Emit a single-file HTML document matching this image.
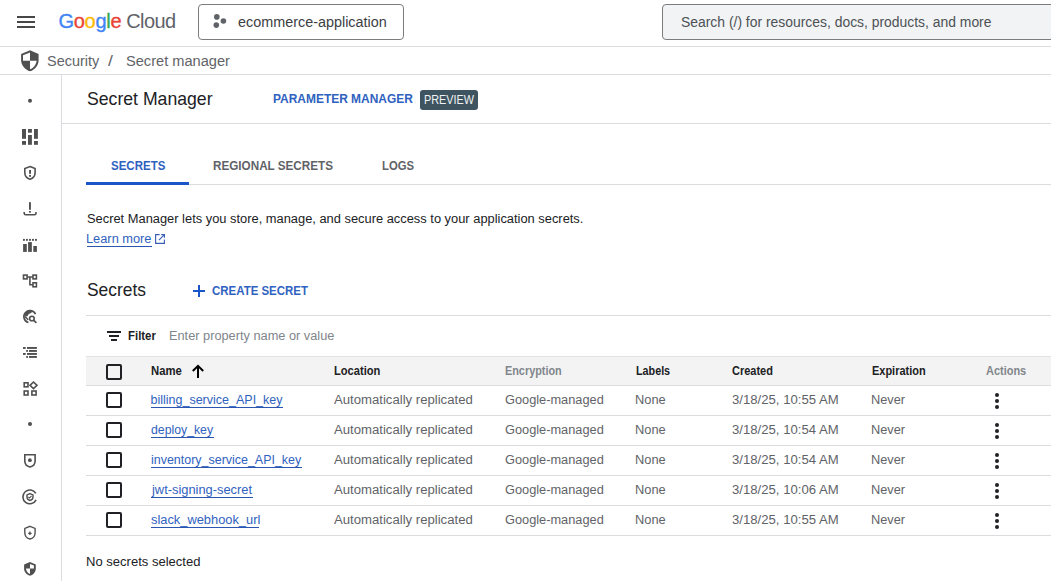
<!DOCTYPE html>
<html><head><meta charset="utf-8"><title>Secret Manager</title>
<style>
html,body{margin:0;padding:0;width:1051px;height:581px;overflow:hidden;background:#fff;position:relative}
.t{position:absolute;white-space:nowrap;font-family:"Liberation Sans", sans-serif}
.b{position:absolute}
</style></head><body>
<div class="b" style="left:17px;top:16px;width:18px;height:2px;background:#474747"></div>
<div class="b" style="left:17px;top:21px;width:18px;height:2px;background:#474747"></div>
<div class="b" style="left:17px;top:26px;width:18px;height:2px;background:#474747"></div>
<div class="t" style="left:58.5px;top:9.79px;font-size:20px;line-height:22.34px;letter-spacing:-0.3px;-webkit-text-stroke:0.35px currentColor"><span style="color:#4285f4">G</span><span style="color:#ea4335">o</span><span style="color:#fbbc04">o</span><span style="color:#4285f4">g</span><span style="color:#34a853">l</span><span style="color:#ea4335">e</span><span style="color:#5f6368;letter-spacing:-0.6px;-webkit-text-stroke:0"> Cloud</span></div>
<div class="b" style="left:198px;top:4px;width:206px;height:36px;border:1px solid #7c7c7c;border-radius:4px;box-sizing:border-box"></div>
<svg class="b" style="left:212px;top:14px" width="16" height="16" viewBox="0 0 16 16"><circle cx="4.8" cy="2.9" r="2.8" fill="#5f6368"/><circle cx="11.4" cy="7" r="2.8" fill="#5f6368"/><circle cx="4.3" cy="11.1" r="2.8" fill="#5f6368"/></svg>
<div class="t" style="left:237.60px;top:13.80px;font-size:14.7px;line-height:16.423px;color:#3c4043;font-weight:400;transform:scaleX(0.9798);transform-origin:0 0;">ecommerce-application</div>
<div class="b" style="left:662px;top:4px;width:400px;height:36px;background:#f1f3f4;border:1px solid #7c7c7c;border-radius:4px;box-sizing:border-box"></div>
<div class="t" style="left:681.40px;top:13.80px;font-size:14.7px;line-height:16.423px;color:#4d5156;font-weight:400;transform:scaleX(0.9461);transform-origin:0 0;">Search (/) for resources, docs, products, and more</div>
<div class="b" style="left:0px;top:46px;width:1051px;height:1px;background:#dadce0"></div>
<svg class="b" style="left:20px;top:50px" width="19" height="22" viewBox="0 0 19 22"><path d="M10 0.3 L18.6 3.9 V9.9 C18.6 15 15 19.6 10 21.3 C5 19.6 1.1 15 1.1 9.9 V3.9 Z" fill="#505050"/><path d="M10 2.5 V10.7 H3 V5.2 Z" fill="#fff"/><path d="M10 10.7 H16.6 C16.2 14.6 13.6 17.9 10 19.2 Z" fill="#fff"/></svg>
<div class="t" style="left:46.70px;top:53.60px;font-size:13.8px;line-height:15.417px;color:#5f6368;font-weight:400;transform:scaleX(1.0473);transform-origin:0 0;">Security</div>
<div class="t" style="left:107.70px;top:53.60px;font-size:13.8px;line-height:15.417px;color:#5f6368;font-weight:400;transform:scaleX(1.2750);transform-origin:0 0;">/</div>
<div class="t" style="left:125.60px;top:53.60px;font-size:13.8px;line-height:15.417px;color:#5f6368;font-weight:400;transform:scaleX(1.0592);transform-origin:0 0;">Secret manager</div>
<div class="b" style="left:0px;top:74px;width:1051px;height:1px;background:#dadce0"></div>
<div class="b" style="left:61px;top:75px;width:1px;height:506px;background:#dadce0"></div>
<div class="t" style="left:86.50px;top:88.85px;font-size:18.2px;line-height:20.333px;color:#202124;font-weight:400;transform:scaleX(0.9703);transform-origin:0 0;">Secret Manager</div>
<div class="t" style="left:273.00px;top:91.70px;font-size:12.7px;line-height:14.188px;color:#2f62c0;font-weight:700;transform:scaleX(0.9418);transform-origin:0 0;">PARAMETER MANAGER</div>
<div class="b" style="left:420px;top:90px;width:58px;height:19.5px;background:#3e5460;border-radius:3px"></div>
<div class="t" style="left:423.73px;top:93.80px;font-size:12.5px;line-height:13.965px;color:#f1f3f4;font-weight:400;transform:scaleX(0.8672);transform-origin:0 0;">PREVIEW</div>
<div class="b" style="left:62px;top:123px;width:989px;height:1px;background:#dadce0"></div>
<div class="t" style="left:110.70px;top:158.85px;font-size:12.7px;line-height:14.188px;color:#2f62c0;font-weight:700;transform:scaleX(0.9065);transform-origin:0 0;">SECRETS</div>
<div class="t" style="left:213.20px;top:158.85px;font-size:12.7px;line-height:14.188px;color:#5f6368;font-weight:700;transform:scaleX(0.9219);transform-origin:0 0;">REGIONAL SECRETS</div>
<div class="t" style="left:381.50px;top:158.85px;font-size:12.7px;line-height:14.188px;color:#5f6368;font-weight:700;transform:scaleX(0.8905);transform-origin:0 0;">LOGS</div>
<div class="b" style="left:86px;top:184px;width:965px;height:1px;background:#dadce0"></div>
<div class="b" style="left:86px;top:182px;width:103px;height:2.5px;background:#1a56c8"></div>
<div class="t" style="left:86.70px;top:212.80px;font-size:12.5px;line-height:13.965px;color:#202124;font-weight:400;transform:scaleX(1.0294);transform-origin:0 0;">Secret Manager lets you store, manage, and secure access to your application secrets.</div>
<div class="t" style="left:85.68px;top:232.60px;font-size:12.5px;line-height:13.965px;color:#2f62c0;font-weight:400;transform:scaleX(1.0243);transform-origin:0 0;">Learn more</div>
<div class="b" style="left:86.7px;top:246px;width:65px;height:1px;background:#2a55b0"></div>
<svg class="b" style="left:154px;top:233px" width="12" height="12" viewBox="0 0 12 12" fill="none" stroke="#3a5fb4" stroke-width="1.15"><path d="M5.6 1.6 H1.6 V10.4 H10.4 V6.4"/><path d="M7.2 1.6 H10.4 V4.8"/><path d="M10.4 1.6 L4.9 7.1"/></svg>
<div class="t" style="left:86.70px;top:279.65px;font-size:18.2px;line-height:20.333px;color:#202124;font-weight:400;transform:scaleX(0.9567);transform-origin:0 0;">Secrets</div>
<div class="b" style="left:193px;top:290px;width:12px;height:2px;background:#1a56c8"></div>
<div class="b" style="left:198px;top:285px;width:2px;height:12px;background:#1a56c8"></div>
<div class="t" style="left:212.10px;top:283.65px;font-size:12.7px;line-height:14.188px;color:#2f62c0;font-weight:700;transform:scaleX(0.9036);transform-origin:0 0;">CREATE SECRET</div>
<div class="b" style="left:86px;top:315px;width:965px;height:1px;background:#dadce0"></div>
<div class="b" style="left:107px;top:331px;width:14px;height:2px;background:#202124"></div>
<div class="b" style="left:109px;top:335.3px;width:10px;height:1.8px;background:#202124"></div>
<div class="b" style="left:111px;top:339.1px;width:6px;height:1.8px;background:#202124"></div>
<div class="t" style="left:127.90px;top:329.60px;font-size:12.0px;line-height:13.406px;color:#202124;font-weight:700;transform:scaleX(0.9505);transform-origin:0 0;">Filter</div>
<div class="t" style="left:169.38px;top:329.60px;font-size:12.5px;line-height:13.965px;color:#80868b;font-weight:400;transform:scaleX(1.0215);transform-origin:0 0;">Enter property name or value</div>
<div class="b" style="left:86px;top:356px;width:965px;height:29.5px;background:#f3f3f3"></div>
<div class="b" style="left:86px;top:356px;width:965px;height:1px;background:#e3e3e3"></div>
<div class="b" style="left:86px;top:385px;width:965px;height:1px;background:#dadce0"></div>
<div class="b" style="left:106px;top:364.2px;width:16px;height:15.5px;border:2px solid #202124;border-radius:2px;box-sizing:border-box"></div>
<div class="t" style="left:150.50px;top:364.75px;font-size:12.0px;line-height:13.406px;color:#202124;font-weight:700;transform:scaleX(0.9421);transform-origin:0 0;">Name</div>
<svg class="b" style="left:190px;top:364px" width="16" height="15" viewBox="0 0 16 15" fill="none" stroke="#000" stroke-width="2"><path d="M8 14 V2.5"/><path d="M2.8 7 L8 1.8 L13.2 7"/></svg>
<div class="t" style="left:333.70px;top:364.75px;font-size:12.0px;line-height:13.406px;color:#202124;font-weight:700;transform:scaleX(0.9262);transform-origin:0 0;">Location</div>
<div class="t" style="left:505.10px;top:364.75px;font-size:12.0px;line-height:13.406px;color:#80868b;font-weight:700;transform:scaleX(0.9047);transform-origin:0 0;">Encryption</div>
<div class="t" style="left:636.30px;top:364.75px;font-size:12.0px;line-height:13.406px;color:#202124;font-weight:700;transform:scaleX(0.8972);transform-origin:0 0;">Labels</div>
<div class="t" style="left:732.00px;top:364.75px;font-size:12.0px;line-height:13.406px;color:#202124;font-weight:700;transform:scaleX(0.9154);transform-origin:0 0;">Created</div>
<div class="t" style="left:872.10px;top:364.75px;font-size:12.0px;line-height:13.406px;color:#202124;font-weight:700;transform:scaleX(0.9135);transform-origin:0 0;">Expiration</div>
<div class="t" style="left:985.50px;top:364.75px;font-size:12.0px;line-height:13.406px;color:#80868b;font-weight:700;transform:scaleX(0.9136);transform-origin:0 0;">Actions</div>
<div class="b" style="left:106px;top:392px;width:16px;height:15.5px;border:2px solid #202124;border-radius:2px;box-sizing:border-box"></div>
<div class="t" style="left:150.50px;top:393.55px;font-size:12.5px;line-height:13.965px;color:#2f62c0;font-weight:400;">billing_service_API_key</div>
<div class="b" style="left:150.5px;top:407px;width:132px;height:1px;background:#2a55b0"></div>
<div class="t" style="left:333.80px;top:393.55px;font-size:12.5px;line-height:13.965px;color:#5f6368;font-weight:400;transform:scaleX(1.0511);transform-origin:0 0;">Automatically replicated</div>
<div class="t" style="left:505.00px;top:393.55px;font-size:12.5px;line-height:13.965px;color:#5f6368;font-weight:400;transform:scaleX(1.0223);transform-origin:0 0;">Google-managed</div>
<div class="t" style="left:635.27px;top:393.55px;font-size:12.5px;line-height:13.965px;color:#5f6368;font-weight:400;transform:scaleX(1.0266);transform-origin:0 0;">None</div>
<div class="t" style="left:732.00px;top:393.55px;font-size:12.5px;line-height:13.965px;color:#5f6368;font-weight:400;transform:scaleX(1.0517);transform-origin:0 0;">3/18/25, 10:55 AM</div>
<div class="t" style="left:870.98px;top:393.55px;font-size:12.5px;line-height:13.965px;color:#5f6368;font-weight:400;transform:scaleX(1.0223);transform-origin:0 0;">Never</div>
<div class="b" style="left:995px;top:393px;width:4px;height:4px;border-radius:50%;background:#202124"></div>
<div class="b" style="left:995px;top:399px;width:4px;height:4px;border-radius:50%;background:#202124"></div>
<div class="b" style="left:995px;top:405px;width:4px;height:4px;border-radius:50%;background:#202124"></div>
<div class="b" style="left:86px;top:415px;width:965px;height:1px;background:#dadce0"></div>
<div class="b" style="left:106px;top:422px;width:16px;height:15.5px;border:2px solid #202124;border-radius:2px;box-sizing:border-box"></div>
<div class="t" style="left:150.50px;top:423.55px;font-size:12.5px;line-height:13.965px;color:#2f62c0;font-weight:400;transform:scaleX(0.9814);transform-origin:0 0;">deploy_key</div>
<div class="b" style="left:150.5px;top:437px;width:63px;height:1px;background:#2a55b0"></div>
<div class="t" style="left:333.80px;top:423.55px;font-size:12.5px;line-height:13.965px;color:#5f6368;font-weight:400;transform:scaleX(1.0511);transform-origin:0 0;">Automatically replicated</div>
<div class="t" style="left:505.00px;top:423.55px;font-size:12.5px;line-height:13.965px;color:#5f6368;font-weight:400;transform:scaleX(1.0223);transform-origin:0 0;">Google-managed</div>
<div class="t" style="left:635.27px;top:423.55px;font-size:12.5px;line-height:13.965px;color:#5f6368;font-weight:400;transform:scaleX(1.0266);transform-origin:0 0;">None</div>
<div class="t" style="left:732.00px;top:423.55px;font-size:12.5px;line-height:13.965px;color:#5f6368;font-weight:400;transform:scaleX(1.0517);transform-origin:0 0;">3/18/25, 10:54 AM</div>
<div class="t" style="left:870.98px;top:423.55px;font-size:12.5px;line-height:13.965px;color:#5f6368;font-weight:400;transform:scaleX(1.0223);transform-origin:0 0;">Never</div>
<div class="b" style="left:995px;top:423px;width:4px;height:4px;border-radius:50%;background:#202124"></div>
<div class="b" style="left:995px;top:429px;width:4px;height:4px;border-radius:50%;background:#202124"></div>
<div class="b" style="left:995px;top:435px;width:4px;height:4px;border-radius:50%;background:#202124"></div>
<div class="b" style="left:86px;top:445px;width:965px;height:1px;background:#dadce0"></div>
<div class="b" style="left:106px;top:452px;width:16px;height:15.5px;border:2px solid #202124;border-radius:2px;box-sizing:border-box"></div>
<div class="t" style="left:150.50px;top:453.55px;font-size:12.5px;line-height:13.965px;color:#2f62c0;font-weight:400;transform:scaleX(0.9966);transform-origin:0 0;">inventory_service_API_key</div>
<div class="b" style="left:150.5px;top:467px;width:151px;height:1px;background:#2a55b0"></div>
<div class="t" style="left:333.80px;top:453.55px;font-size:12.5px;line-height:13.965px;color:#5f6368;font-weight:400;transform:scaleX(1.0511);transform-origin:0 0;">Automatically replicated</div>
<div class="t" style="left:505.00px;top:453.55px;font-size:12.5px;line-height:13.965px;color:#5f6368;font-weight:400;transform:scaleX(1.0223);transform-origin:0 0;">Google-managed</div>
<div class="t" style="left:635.27px;top:453.55px;font-size:12.5px;line-height:13.965px;color:#5f6368;font-weight:400;transform:scaleX(1.0266);transform-origin:0 0;">None</div>
<div class="t" style="left:732.00px;top:453.55px;font-size:12.5px;line-height:13.965px;color:#5f6368;font-weight:400;transform:scaleX(1.0517);transform-origin:0 0;">3/18/25, 10:54 AM</div>
<div class="t" style="left:870.98px;top:453.55px;font-size:12.5px;line-height:13.965px;color:#5f6368;font-weight:400;transform:scaleX(1.0223);transform-origin:0 0;">Never</div>
<div class="b" style="left:995px;top:453px;width:4px;height:4px;border-radius:50%;background:#202124"></div>
<div class="b" style="left:995px;top:459px;width:4px;height:4px;border-radius:50%;background:#202124"></div>
<div class="b" style="left:995px;top:465px;width:4px;height:4px;border-radius:50%;background:#202124"></div>
<div class="b" style="left:86px;top:475px;width:965px;height:1px;background:#dadce0"></div>
<div class="b" style="left:106px;top:482px;width:16px;height:15.5px;border:2px solid #202124;border-radius:2px;box-sizing:border-box"></div>
<div class="t" style="left:151.53px;top:483.55px;font-size:12.5px;line-height:13.965px;color:#2f62c0;font-weight:400;transform:scaleX(1.0285);transform-origin:0 0;">jwt-signing-secret</div>
<div class="b" style="left:150.5px;top:497px;width:102px;height:1px;background:#2a55b0"></div>
<div class="t" style="left:333.80px;top:483.55px;font-size:12.5px;line-height:13.965px;color:#5f6368;font-weight:400;transform:scaleX(1.0511);transform-origin:0 0;">Automatically replicated</div>
<div class="t" style="left:505.00px;top:483.55px;font-size:12.5px;line-height:13.965px;color:#5f6368;font-weight:400;transform:scaleX(1.0223);transform-origin:0 0;">Google-managed</div>
<div class="t" style="left:635.27px;top:483.55px;font-size:12.5px;line-height:13.965px;color:#5f6368;font-weight:400;transform:scaleX(1.0266);transform-origin:0 0;">None</div>
<div class="t" style="left:732.00px;top:483.55px;font-size:12.5px;line-height:13.965px;color:#5f6368;font-weight:400;transform:scaleX(1.0517);transform-origin:0 0;">3/18/25, 10:06 AM</div>
<div class="t" style="left:870.98px;top:483.55px;font-size:12.5px;line-height:13.965px;color:#5f6368;font-weight:400;transform:scaleX(1.0223);transform-origin:0 0;">Never</div>
<div class="b" style="left:995px;top:483px;width:4px;height:4px;border-radius:50%;background:#202124"></div>
<div class="b" style="left:995px;top:489px;width:4px;height:4px;border-radius:50%;background:#202124"></div>
<div class="b" style="left:995px;top:495px;width:4px;height:4px;border-radius:50%;background:#202124"></div>
<div class="b" style="left:86px;top:505px;width:965px;height:1px;background:#dadce0"></div>
<div class="b" style="left:106px;top:512px;width:16px;height:15.5px;border:2px solid #202124;border-radius:2px;box-sizing:border-box"></div>
<div class="t" style="left:150.50px;top:513.55px;font-size:12.5px;line-height:13.965px;color:#2f62c0;font-weight:400;transform:scaleX(1.0281);transform-origin:0 0;">slack_webhook_url</div>
<div class="b" style="left:150.5px;top:527px;width:108px;height:1px;background:#2a55b0"></div>
<div class="t" style="left:333.80px;top:513.55px;font-size:12.5px;line-height:13.965px;color:#5f6368;font-weight:400;transform:scaleX(1.0511);transform-origin:0 0;">Automatically replicated</div>
<div class="t" style="left:505.00px;top:513.55px;font-size:12.5px;line-height:13.965px;color:#5f6368;font-weight:400;transform:scaleX(1.0223);transform-origin:0 0;">Google-managed</div>
<div class="t" style="left:635.27px;top:513.55px;font-size:12.5px;line-height:13.965px;color:#5f6368;font-weight:400;transform:scaleX(1.0266);transform-origin:0 0;">None</div>
<div class="t" style="left:732.00px;top:513.55px;font-size:12.5px;line-height:13.965px;color:#5f6368;font-weight:400;transform:scaleX(1.0517);transform-origin:0 0;">3/18/25, 10:55 AM</div>
<div class="t" style="left:870.98px;top:513.55px;font-size:12.5px;line-height:13.965px;color:#5f6368;font-weight:400;transform:scaleX(1.0223);transform-origin:0 0;">Never</div>
<div class="b" style="left:995px;top:513px;width:4px;height:4px;border-radius:50%;background:#202124"></div>
<div class="b" style="left:995px;top:519px;width:4px;height:4px;border-radius:50%;background:#202124"></div>
<div class="b" style="left:995px;top:525px;width:4px;height:4px;border-radius:50%;background:#202124"></div>
<div class="b" style="left:86px;top:535px;width:965px;height:1px;background:#dadce0"></div>
<div class="t" style="left:85.56px;top:555.80px;font-size:12.5px;line-height:13.965px;color:#202124;font-weight:400;transform:scaleX(1.0430);transform-origin:0 0;">No secrets selected</div>
<svg class="b" style="left:0;top:75px" width="61" height="506" viewBox="0 75 61 506">
<g fill="#505050" stroke="none">
<circle cx="30" cy="100.8" r="2"/>
<rect x="22" y="129" width="4" height="9.8"/><rect x="22" y="141" width="4" height="3.8"/>
<rect x="28" y="129" width="3.9" height="3.7"/><rect x="28" y="135" width="3.9" height="9.8"/>
<rect x="34" y="129" width="3.9" height="9.8"/><rect x="34" y="141" width="3.9" height="3.8"/>
<rect x="29.1" y="170" width="1.9" height="3.8"/><rect x="29.1" y="174.9" width="1.9" height="1.9"/>
<rect x="29" y="202.2" width="1.9" height="7.6"/><rect x="29" y="211" width="1.9" height="1.6"/>
<rect x="23" y="238.9" width="1.9" height="1.9"/><rect x="26" y="238.9" width="1.9" height="1.9"/><rect x="29" y="238.9" width="1.9" height="1.9"/><rect x="32" y="238.9" width="1.9" height="1.9"/><rect x="35" y="238.9" width="1.9" height="1.9"/>
<rect x="23.1" y="244" width="3.7" height="7.9"/><rect x="28.1" y="242.1" width="3.75" height="9.8"/><rect x="33.3" y="246" width="3.6" height="5.9"/>
<rect x="23" y="347" width="2.7" height="1.9"/><rect x="27" y="347" width="9.9" height="1.9"/>
<rect x="26.2" y="350" width="1.7" height="1.9"/><rect x="29" y="350" width="7.9" height="1.9"/>
<rect x="23" y="353" width="2.7" height="1.9"/><rect x="27" y="353" width="9.9" height="1.9"/>
<rect x="26.2" y="356" width="1.7" height="1.9"/><rect x="29" y="356" width="7.9" height="1.9"/>
<circle cx="30" cy="424" r="2"/>
<circle cx="29.9" cy="460.2" r="1.9"/>
<path d="M29.9 531.6 v3.4 M28.2 533.3 h3.4" stroke="#505050" stroke-width="1.3"/>
<path d="M30 562 L35.8 564.4 V568.6 C35.8 572 33.5 574.9 30 575.8 C26.5 574.9 24.1 572 24.1 568.6 V564.4 Z"/>
</g>
<g fill="none" stroke="#505050" stroke-width="1.6">
<path d="M30 166.5 L35.1 168.6 V172.6 C35.1 175.8 33 178.5 30 179.2 C27 178.5 24.8 175.8 24.8 172.6 V168.6 Z"/>
<path d="M24.2 212 V213.2 Q24.2 214.8 25.8 214.8 H34.4 Q36 214.8 36 213.2 V212"/>
<rect x="23.5" y="275.1" width="3.6" height="3.8"/><rect x="33" y="275.1" width="3.4" height="3.8"/><rect x="33" y="282.8" width="3.4" height="4"/>
<path d="M27.1 277 H33 M29.9 277 V284.8 H33"/>
<path d="M35.53 314.02 A6.1 6.1 0 1 0 28.42 322.49" stroke-width="1.7"/><circle cx="31.9" cy="318.5" r="2.3" stroke-width="1.6"/><path d="M33.6 320.2 L36.4 322.9" stroke-width="1.7"/>
<rect x="24.2" y="382.8" width="3.8" height="4"/><rect x="24.2" y="391" width="3.8" height="4"/><rect x="31.9" y="391" width="4.2" height="4"/>
<path d="M33.5 382 L37 385.3 L33.5 388.6 L30 385.3 Z"/>
<path d="M24.8 454.8 H35.1 V461 C35.1 464 33 466.3 30 467.1 C27 466.3 24.8 464 24.8 461 Z"/>
<path d="M35.78 493.45 A6.9 6.9 0 1 0 36.05 499.82"/><path d="M28.4 496.8 L29.6 498 L31.5 495.9" stroke-width="1.1"/>
<path d="M30 493.6 L33 494.9 V497 C33 498.8 31.8 500 30 500.5 C28.2 500 27 498.8 27 497 V494.9 Z" stroke-width="1.4"/>
<path d="M30 526.3 L35.1 528.4 V532.4 C35.1 535.6 33 538.3 30 539 C27 538.3 24.8 535.6 24.8 532.4 V528.4 Z" stroke-width="1.4"/>
</g>
<path d="M30 564 L33.9 565.6 V568.6 H30 Z M30 568.6 H26 C26.3 571.3 27.8 573.3 30 574 Z" fill="#fff"/>
<path d="M26 572.2 C26.6 569.5 28.6 568.2 30.6 568.6" fill="none" stroke="#505050" stroke-width="0"/>
<circle cx="30" cy="316.3" r="0" />
<path d="M24.2 315.2 C24.8 312.3 27 310.6 30 310.4 C31.6 310.5 32.2 311.4 31.8 312.3 C31 313.6 29.2 313.4 28.4 314.4 C27.8 315.2 27.6 316.2 26.8 316.6 Z" fill="#505050"/><path d="M24.6 316.2 L28.2 319.8" stroke="#505050" stroke-width="1.6"/></svg>
</body></html>
